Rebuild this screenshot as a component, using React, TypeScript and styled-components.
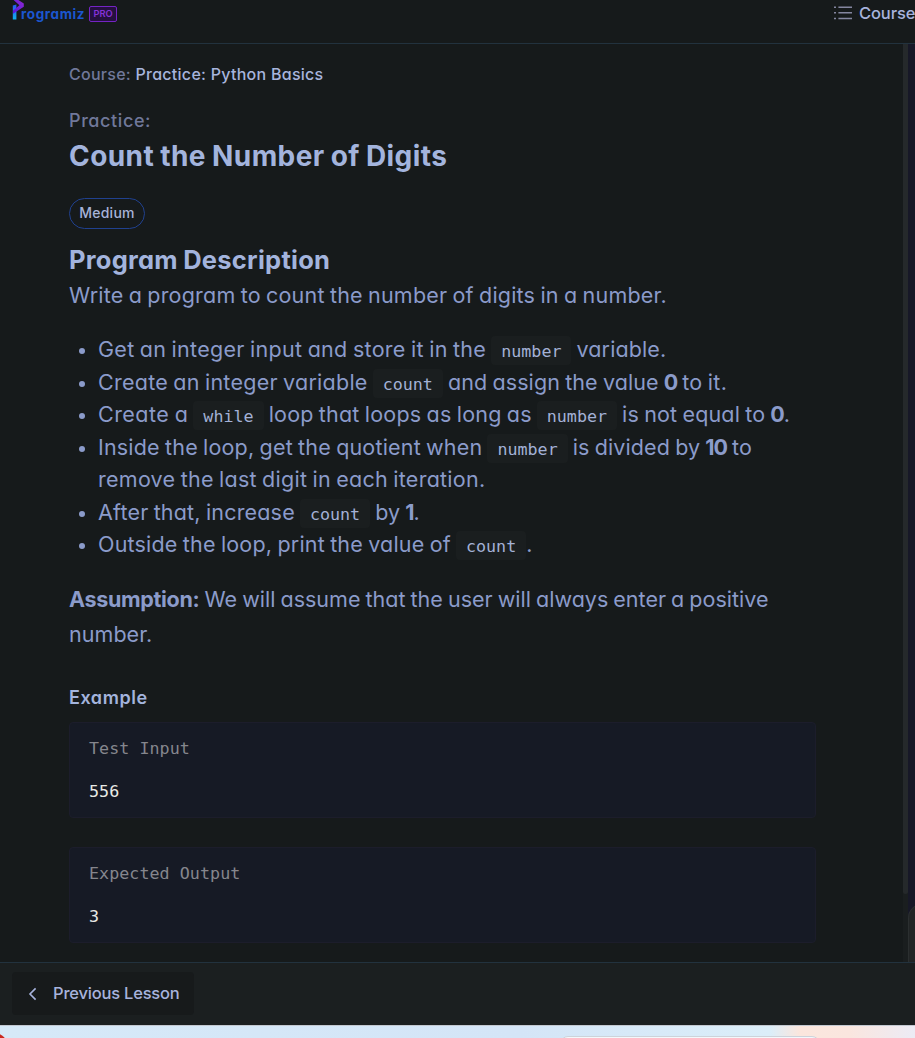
import React from "react";
import styled, { createGlobalStyle } from "styled-components";

const GlobalStyle = createGlobalStyle`
  * { box-sizing: border-box; }
  body {
    margin: 0;
    background: #161a1b;
    font-family: Inter, "Open Sans", sans-serif;
    font-feature-settings: "cv11";
    overflow: hidden;
  }
  h1, h2, h3, p, ul { margin: 0; padding: 0; }
`;

const mono = `"DejaVu Sans Mono", monospace`;

const Page = styled.div`
  width: 100%;
  height: 1038px;
  display: flex;
  flex-direction: column;
  overflow: hidden;
`;

const Header = styled.header`
  flex: none;
  height: 44px;
  border-bottom: 1px solid #22323e;
  display: flex;
  justify-content: space-between;
  align-items: flex-start;
  padding-left: 12px;
  overflow: hidden;
`;

const Brand = styled.div`
  display: flex;
  align-items: flex-start;
`;

const BrandMark = styled.svg`
  display: block;
  width: 12px;
  height: 21px;
  margin-right: -3px;
`;

const BrandName = styled.span`
  font-size: 13.5px;
  font-weight: 700;
  line-height: 18px;
  margin-top: 5px;
  letter-spacing: 0.6px;
  color: #1b56cf;
`;

const ProTag = styled.span`
  height: 16px;
  width: 28px;
  margin: 6px 0 0 4px;
  border: 1px solid #7424c4;
  border-radius: 2px;
  background: #25103f;
  color: #8432d8;
  font-size: 9.3px;
  font-weight: 600;
  line-height: 14px;
  text-align: center;
`;

const CourseLink = styled.a`
  flex: none;
  width: 81px;
  display: flex;
  align-items: flex-start;
  gap: 7px;
  white-space: nowrap;
  color: #a7b3dd;
  font-size: 16.5px;
  font-weight: 500;
  line-height: 20px;
  letter-spacing: -0.1px;
`;

const ListIcon = styled.svg`
  flex: none;
  display: block;
  width: 18px;
  height: 14px;
  margin-top: 6px;
`;

const LinkText = styled.span`
  margin-top: 3px;
`;

const Body = styled.div`
  flex: none;
  height: 918px;
  display: flex;
`;

const Lesson = styled.main`
  flex: 1;
  min-width: 0;
  padding: 20px 87px 0 69px;
`;

const Breadcrumb = styled.p`
  font-size: 16px;
  font-weight: 500;
  line-height: 20px;
  letter-spacing: 0.27px;
  color: #a7b5dd;
`;

const Muted = styled.span`
  color: #70789a;
`;

const Kind = styled.p`
  margin-top: 25.5px;
  font-size: 18px;
  font-weight: 500;
  line-height: 22px;
  letter-spacing: 0.6px;
  color: #70789a;
`;

const Title = styled.h1`
  margin-top: 8.5px;
  font-size: 28px;
  font-weight: 650;
  line-height: 32px;
  letter-spacing: 0.43px;
  word-spacing: -1px;
  color: #a3b4dd;
`;

const Badge = styled.span`
  display: flex;
  align-items: center;
  justify-content: center;
  width: 76px;
  height: 31px;
  margin-top: 26px;
  padding-bottom: 2px;
  border: 1px solid #20418f;
  border-radius: 16px;
  color: #a7b3d8;
  font-size: 14px;
  font-weight: 500;
  letter-spacing: 0.25px;
`;

const SectionTitle = styled.h2`
  margin-top: 16px;
  font-size: 25.5px;
  font-weight: 650;
  line-height: 30px;
  letter-spacing: 0.25px;
  word-spacing: -1px;
  color: #a3b4dd;
`;

const Paragraph = styled.p<{ $gap: number }>`
  margin-top: ${(p) => p.$gap}px;
  font-size: 21.5px;
  line-height: 35.4px;
  word-spacing: -1px;
  color: #8b9bca;
`;

const Steps = styled.ul`
  margin-top: 20px;
  list-style: none;
  font-size: 21.5px;
  line-height: 32.6px;
  word-spacing: -1px;
  color: #8b9bca;
`;

const Step = styled.li`
  display: grid;
  grid-template-columns: 29px 1fr;
  white-space: nowrap;

  &::before {
    content: "";
    width: 6px;
    height: 6px;
    margin: 15px 0 0 10px;
    border-radius: 50%;
    background: #8b9bca;
  }
`;

const Run = styled.span<{ $track: number }>`
  letter-spacing: ${(p) => p.$track}px;
`;

const Strong = styled.strong<{ $track?: number }>`
  font-weight: 700;
  letter-spacing: ${(p) => p.$track ?? -1.1}px;
`;

const Code = styled.code`
  padding: 5px 10px 4px;
  border-radius: 4px;
  background: #1a1e1f;
  color: #a3b1d6;
  font-family: ${mono};
  font-size: 16.7px;
  line-height: 1;
`;

const ExampleTitle = styled.h3`
  margin-top: 33.4px;
  font-size: 18px;
  font-weight: 600;
  line-height: 24px;
  letter-spacing: 0.55px;
  color: #a3b4dd;
`;

const Sample = styled.section<{ $gap: number }>`
  width: 747px;
  height: 96px;
  margin-top: ${(p) => p.$gap}px;
  padding: 13px 19px;
  border: 1px solid #1c1d2b;
  border-radius: 4px;
  background: #161a25;
  display: flex;
  flex-direction: column;
  gap: 18.5px;
  font-family: ${mono};
  font-size: 16.7px;
  line-height: 24px;
  letter-spacing: 0.04px;
`;

const SampleLabel = styled.span`
  color: #85868d;
`;

const SampleValue = styled.span`
  color: #e9eae6;
`;

const ScrollTrack = styled.div`
  flex: none;
  width: 5px;
  background: #1a1e1f;
`;

const ScrollThumb = styled.div`
  height: 850px;
  border-radius: 0 0 3px 3px;
  background: #25292b;
`;

const EditorEdge = styled.div`
  flex: none;
  width: 7px;
  background: #171827;
  display: flex;
  align-items: flex-end;
  overflow: hidden;
`;

const EditorTab = styled.div`
  flex: none;
  width: 24px;
  height: 58px;
  border: 1px solid #2b2f30;
  border-bottom: 0;
  border-radius: 14px 0 0 0;
  background: #222526;
`;

const Footer = styled.footer`
  flex: none;
  height: 63px;
  padding: 9px 12px 0;
  border-top: 1px solid #22323e;
  background: #1b1f20;
`;

const PreviousButton = styled.button`
  width: 182px;
  height: 43px;
  padding: 0 0 1px 16px;
  border: 0;
  border-radius: 4px;
  background: #171a1b;
  color: #a7b3dd;
  display: flex;
  align-items: center;
  gap: 16px;
  font-family: inherit;
  font-feature-settings: inherit;
  font-size: 16.5px;
  font-weight: 500;
  letter-spacing: -0.2px;
  white-space: nowrap;
`;

const Chevron = styled.svg`
  display: block;
  width: 9px;
  height: 14px;
  margin-top: 2px;
`;

const Desktop = styled.div`
  flex: none;
  position: relative;
  height: 13px;
  overflow: hidden;
  border-top: 1px solid #c3c8d0;
  background: linear-gradient(
    90deg,
    #d6e9f8 0,
    #d4e5f7 520px,
    #dbeef9 770px,
    #fbe6dd 800px,
    #fae6df 850px,
    #ecebf5 915px
  );
`;

const RedDot = styled.div`
  position: absolute;
  left: -20px;
  top: 7px;
  width: 28px;
  height: 28px;
  border-radius: 50%;
  background: #c9281f;
`;

const Taskbar = styled.div`
  position: absolute;
  left: 560px;
  top: 10px;
  width: 260px;
  height: 40px;
  border: 1px solid #cdd3da;
  border-radius: 8px;
  background: #f3f8fc;
`;

export default function App() {
  return (
    <Page>
      <GlobalStyle />
      <Header>
        <Brand>
          <BrandMark viewBox="0 0 12 21">
            <defs>
              <linearGradient id="stem" x1="0" y1="0" x2="0" y2="1">
                <stop offset="0" stopColor="#2a55f0" />
                <stop offset="1" stopColor="#10b2ee" />
              </linearGradient>
              <linearGradient id="bowl" x1="0" y1="1" x2="1" y2="0">
                <stop offset="0" stopColor="#5414e0" />
                <stop offset="1" stopColor="#8f2ad0" />
              </linearGradient>
            </defs>
            <path d="M0.8 5.6 4.4 4.6V19.6H0.8Z" fill="url(#stem)" />
            <path d="M1.6 0H6.4L11.8 3.4V6.8L1 13.8V10.4L7.4 5.2Z" fill="url(#bowl)" />
          </BrandMark>
          <BrandName>rogramiz</BrandName>
          <ProTag>PRO</ProTag>
        </Brand>
        <CourseLink>
          <ListIcon viewBox="0 0 18 14" stroke="#84869f" strokeWidth="1.5">
            <path d="M0 1.2h2M4.4 1.2H18M0 6.8h2M4.4 6.8H18M0 12.4h2M4.4 12.4H18" />
          </ListIcon>
          <LinkText>Course</LinkText>
        </CourseLink>
      </Header>

      <Body>
        <Lesson>
          <Breadcrumb>
            <Muted>Course:</Muted> Practice: Python Basics
          </Breadcrumb>
          <Kind>Practice:</Kind>
          <Title>Count the Number of Digits</Title>
          <Badge>Medium</Badge>

          <SectionTitle>Program Description</SectionTitle>
          <Paragraph $gap={2.5}>
            <Run $track={0.2}>Write a program to count the number of digits in a number.</Run>
          </Paragraph>

          <Steps>
            <Step>
              <div>
                <Run $track={0.29}>Get an integer input and store it in the</Run> <Code>number</Code>{" "}
                <Run $track={0.12}>variable.</Run>
              </div>
            </Step>
            <Step>
              <div>
                <Run $track={0.25}>Create an integer variable</Run> <Code>count</Code>{" "}
                <Run $track={0.1}>and assign the value</Run> <Strong>0</Strong> <Run $track={0.3}>to it.</Run>
              </div>
            </Step>
            <Step>
              <div>
                <Run $track={0.45}>Create a</Run> <Code>while</Code>{" "}
                <Run $track={0.2}>loop that loops as long as</Run> <Code>number</Code>{" "}
                <Run $track={0.16}>is not equal to</Run> <Strong>0</Strong>.
              </div>
            </Step>
            <Step>
              <div>
                <Run $track={0.18}>Inside the loop, get the quotient when</Run> <Code>number</Code>{" "}
                <Run $track={0.12}>is divided by</Run> <Strong>10</Strong> <Run $track={0.3}>to</Run>
                <br />
                <Run $track={0.26}>remove the last digit in each iteration.</Run>
              </div>
            </Step>
            <Step>
              <div>
                <Run $track={0.18}>After that, increase</Run> <Code>count</Code> <Run $track={0.1}>by</Run>{" "}
                <Strong>1</Strong>.
              </div>
            </Step>
            <Step>
              <div>
                <Run $track={0.19}>Outside the loop, print the value of</Run> <Code>count</Code>.
              </div>
            </Step>
          </Steps>

          <Paragraph $gap={20.6}>
            <Strong $track={-0.32}>Assumption:</Strong>{" "}
            <Run $track={0.01}>We will assume that the user will always enter a positive</Run>
            <br />
            <Run $track={0.05}>number.</Run>
          </Paragraph>

          <ExampleTitle>Example</ExampleTitle>
          <Sample $gap={12.4}>
            <SampleLabel>Test Input</SampleLabel>
            <SampleValue>556</SampleValue>
          </Sample>
          <Sample $gap={29}>
            <SampleLabel>Expected Output</SampleLabel>
            <SampleValue>3</SampleValue>
          </Sample>
        </Lesson>
        <ScrollTrack>
          <ScrollThumb />
        </ScrollTrack>
        <EditorEdge>
          <EditorTab />
        </EditorEdge>
      </Body>

      <Footer>
        <PreviousButton>
          <Chevron viewBox="0 0 9 14" fill="none" stroke="#a7b3dd" strokeWidth="1.6">
            <path d="M7.6 1.4 2 7l5.6 5.6" />
          </Chevron>
          Previous Lesson
        </PreviousButton>
      </Footer>
      <Desktop>
        <RedDot />
        <Taskbar />
      </Desktop>
    </Page>
  );
}
